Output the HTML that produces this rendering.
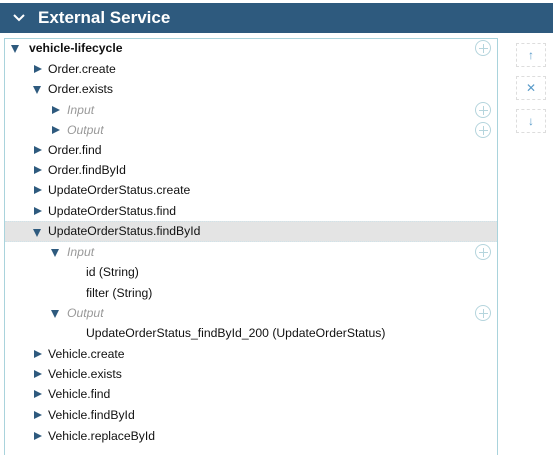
<!DOCTYPE html>
<html style="overflow:hidden;height:455px"><head><style>
body{margin:0;width:557px;height:455px;background:#fff;font-family:"Liberation Sans",Arial,sans-serif;position:relative;overflow:hidden}
.hdr{position:absolute;left:0;top:3px;width:553px;height:30px;background:#2e5a7e;color:#fff;font-weight:bold;font-size:17px;line-height:30px}
.hdr span{position:absolute;left:38px;top:0}
.box{position:absolute;left:4px;top:38px;width:492px;height:430px;border:1px solid #a9d3dc}
.row{position:absolute;left:5px;width:492px;height:20px;font-size:12.2px;line-height:20px;color:#111}
.sel{background:#e4e4e4;border-top:1px dotted #cfe3ea;border-bottom:1px dotted #cfe3ea}
.t{position:absolute;top:0}
.it{font-style:italic;color:#999}
.tri{position:absolute;width:0;height:0}
.r{border-left:8px solid #2e5a7e;border-top:4px solid transparent;border-bottom:4px solid transparent;top:6px}
.d{border-top:8px solid #2e5a7e;border-left:4px solid transparent;border-right:4px solid transparent;top:7px}
.plus{position:absolute;left:470px;top:2px;width:14px;height:14px;border:1px solid #b5d5dd;border-radius:50%}
.plus:before{content:"";position:absolute;left:3px;top:7px;width:9px;height:1px;background:#b5d5dd}
.plus:after{content:"";position:absolute;left:7px;top:3px;width:1px;height:9px;background:#b5d5dd}
.btn{position:absolute;left:516px;width:28px;height:22px;border:1px dashed #ddd;color:#5a9bc9;font-size:12px;text-align:center;line-height:22px}
</style></head><body>
<div class="hdr"><svg style="position:absolute;left:13px;top:11px" width="12" height="8"><path d="M1 1 L6 6 L11 1" stroke="#fff" stroke-width="2" fill="none"/></svg><span>External Service</span></div>
<div class="box"></div>
<div class="btn" style="top:43px">↑</div>
<div class="btn" style="top:76px">✕</div>
<div class="btn" style="top:109px">↓</div>

<div class="row" style="top:38px"><i class="tri d" style="left:6px"></i><b class="t" style="left:24px">vehicle-lifecycle</b><i class="plus"></i></div>
<div class="row" style="top:59px"><i class="tri r" style="left:29px"></i><span class="t" style="left:43px">Order.create</span></div>
<div class="row" style="top:79px"><i class="tri d" style="left:28px"></i><span class="t" style="left:43px">Order.exists</span></div>
<div class="row" style="top:100px"><i class="tri r" style="left:47px"></i><span class="t it" style="left:62px">Input</span><i class="plus"></i></div>
<div class="row" style="top:120px"><i class="tri r" style="left:47px"></i><span class="t it" style="left:62px">Output</span><i class="plus"></i></div>
<div class="row" style="top:140px"><i class="tri r" style="left:29px"></i><span class="t" style="left:43px">Order.find</span></div>
<div class="row" style="top:160px"><i class="tri r" style="left:29px"></i><span class="t" style="left:43px">Order.findById</span></div>
<div class="row" style="top:180px"><i class="tri r" style="left:29px"></i><span class="t" style="left:43px">UpdateOrderStatus.create</span></div>
<div class="row" style="top:201px"><i class="tri r" style="left:29px"></i><span class="t" style="left:43px">UpdateOrderStatus.find</span></div>
<div class="row sel" style="top:221px;height:19px;line-height:19px"><i class="tri d" style="left:28px"></i><span class="t" style="left:43px">UpdateOrderStatus.findById</span></div>
<div class="row" style="top:242px"><i class="tri d" style="left:46px"></i><span class="t it" style="left:62px">Input</span><i class="plus"></i></div>
<div class="row" style="top:262px"><span class="t" style="left:81px">id (String)</span></div>
<div class="row" style="top:283px"><span class="t" style="left:81px">filter (String)</span></div>
<div class="row" style="top:303px"><i class="tri d" style="left:46px"></i><span class="t it" style="left:62px">Output</span><i class="plus"></i></div>
<div class="row" style="top:323px"><span class="t" style="left:81px">UpdateOrderStatus_findById_200 (UpdateOrderStatus)</span></div>
<div class="row" style="top:344px"><i class="tri r" style="left:29px"></i><span class="t" style="left:43px">Vehicle.create</span></div>
<div class="row" style="top:364px"><i class="tri r" style="left:29px"></i><span class="t" style="left:43px">Vehicle.exists</span></div>
<div class="row" style="top:384px"><i class="tri r" style="left:29px"></i><span class="t" style="left:43px">Vehicle.find</span></div>
<div class="row" style="top:405px"><i class="tri r" style="left:29px"></i><span class="t" style="left:43px">Vehicle.findById</span></div>
<div class="row" style="top:426px"><i class="tri r" style="left:29px"></i><span class="t" style="left:43px">Vehicle.replaceById</span></div>
</body></html>
